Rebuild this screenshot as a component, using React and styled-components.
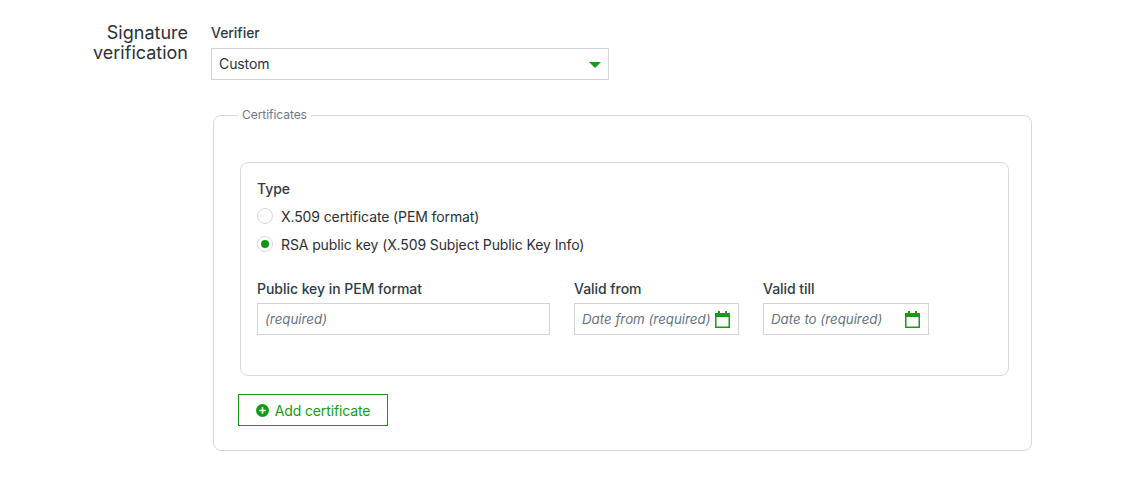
import React from 'react';
import styled, {createGlobalStyle} from 'styled-components';

const GlobalStyle = createGlobalStyle`
body {
  margin: 0;
  background: #fff;
  font-family: "Inter", "Liberation Sans", sans-serif;
  color: #2f3b48;
}
`
const Page = styled.div`
display: flex;
align-items: flex-start;
width: 1148px;
height: 485px;
overflow: hidden;
padding-top: 23px;
box-sizing: border-box;
`
const SectionTitle = styled.h2`
box-sizing: border-box;
width: 188px;
margin: 0;
padding-left: 80px;
flex: none;
text-align: right;
font-size: 18px;
line-height: 20px;
font-weight: 400;
color: #2b3138;
`
const Content = styled.div`
margin-left: 23px;
width: 821px;
`
const Label = styled.label`
display: block;
font-size: 14px;
line-height: 20px;
font-weight: 500;
letter-spacing: -0.04px;
color: #2f3b48;
margin-bottom: ${p => p.$gap}px;
`
const SelectBox = styled.div`
display: flex;
align-items: center;
justify-content: space-between;
box-sizing: border-box;
width: 398px;
height: 32px;
padding: 0 7px 2px;
border: 1px solid #cfd5da;
font-size: 14px;
letter-spacing: -0.1px;
color: #2b3138;
`
const Caret = styled.span`
width: 0;
height: 0;
margin-top: 4px;
border-left: 6px solid transparent;
border-right: 6px solid transparent;
border-top: 6px solid #129d12;
`
const Certificates = styled.fieldset`
box-sizing: border-box;
width: 819px;
height: 343px;
margin: 28px 0 0 2px;
padding: 40px 22px 0 26px;
border: 1px solid #d9d9d9;
border-radius: 8px;
`
const Legend = styled.legend`
margin-left: -2px;
padding: 0 4px;
font-size: 12px;
line-height: 14px;
letter-spacing: -0.05px;
color: #6d7885;
`
const CertCard = styled.div`
box-sizing: border-box;
height: 214px;
padding: 16px;
border: 1px solid #d9d9d9;
border-radius: 8px;
`
const RadioRow = styled.div`
display: flex;
align-items: center;
gap: 8px;
height: 28px;
font-size: 14px;
letter-spacing: -0.11px;
color: #2b3138;
`
const RadioMark = styled.span`
display: flex;
align-items: center;
justify-content: center;
box-sizing: border-box;
width: 16px;
height: 16px;
border: 1px solid #d4d9de;
border-radius: 50%;
&::after {
  content: "";
  display: ${p => (p.$checked ? 'block' : 'none')};
  width: 8px;
  height: 8px;
  border-radius: 50%;
  background: #0f970f;
}
`
const Fields = styled.div`
display: flex;
gap: 24px;
margin-top: 21px;
`
const InputBox = styled.div`
display: flex;
align-items: center;
justify-content: space-between;
box-sizing: border-box;
width: ${p => p.$width}px;
height: 32px;
padding: 0 8px 0 7px;
border: 1px solid #cfd5da;
font-size: 13.3px;
font-style: italic;
color: #68737f;
white-space: nowrap;
`
const CalendarIcon = styled.svg`
flex: none;
width: 15px;
height: 17px;
`
const AddButton = styled.button`
display: flex;
align-items: center;
justify-content: center;
gap: 6px;
box-sizing: border-box;
width: 150px;
height: 32px;
margin: 18px 0 0 -2px;
padding: 0;
border: 1px solid #129d12;
background: #fff;
font-family: inherit;
font-size: 14px;
letter-spacing: -0.14px;
color: #129d12;
`

const Calendar = () => (
    <CalendarIcon viewBox="0 0 15 17">
        <path fill="#129d12" d="M0 2h3V0h2v2h5V0h2v2h3v15H0z"/>
        <rect x="1.5" y="6" width="12" height="9.5" fill="#fff"/>
    </CalendarIcon>
)

const PlusCircle = () => (
    <svg width="13" height="13" viewBox="0 0 13 13">
        <circle cx="6.5" cy="6.5" r="6.5" fill="#129d12"/>
        <path d="M6.5 3.2v6.6M3.2 6.5h6.6" stroke="#fff" strokeWidth="1.6"/>
    </svg>
)

export default function App(){
    return(
        <Page>
            <GlobalStyle/>
            <SectionTitle>Signature verification</SectionTitle>
            <Content>
                <Label $gap={5}>Verifier</Label>
                <SelectBox>Custom<Caret/></SelectBox>
                <Certificates>
                    <Legend>Certificates</Legend>
                    <CertCard>
                        <Label $gap={3}>Type</Label>
                        <RadioRow><RadioMark/>X.509 certificate (PEM format)</RadioRow>
                        <RadioRow><RadioMark $checked/>RSA public key (X.509 Subject Public Key Info)</RadioRow>
                        <Fields>
                            <div>
                                <Label $gap={4}>Public key in PEM format</Label>
                                <InputBox $width={293}>(required)</InputBox>
                            </div>
                            <div>
                                <Label $gap={4}>Valid from</Label>
                                <InputBox $width={165}>Date from (required)<Calendar/></InputBox>
                            </div>
                            <div>
                                <Label $gap={4}>Valid till</Label>
                                <InputBox $width={166}>Date to (required)<Calendar/></InputBox>
                            </div>
                        </Fields>
                    </CertCard>
                    <AddButton type="button"><PlusCircle/>Add certificate</AddButton>
                </Certificates>
            </Content>
        </Page>
    );
}
